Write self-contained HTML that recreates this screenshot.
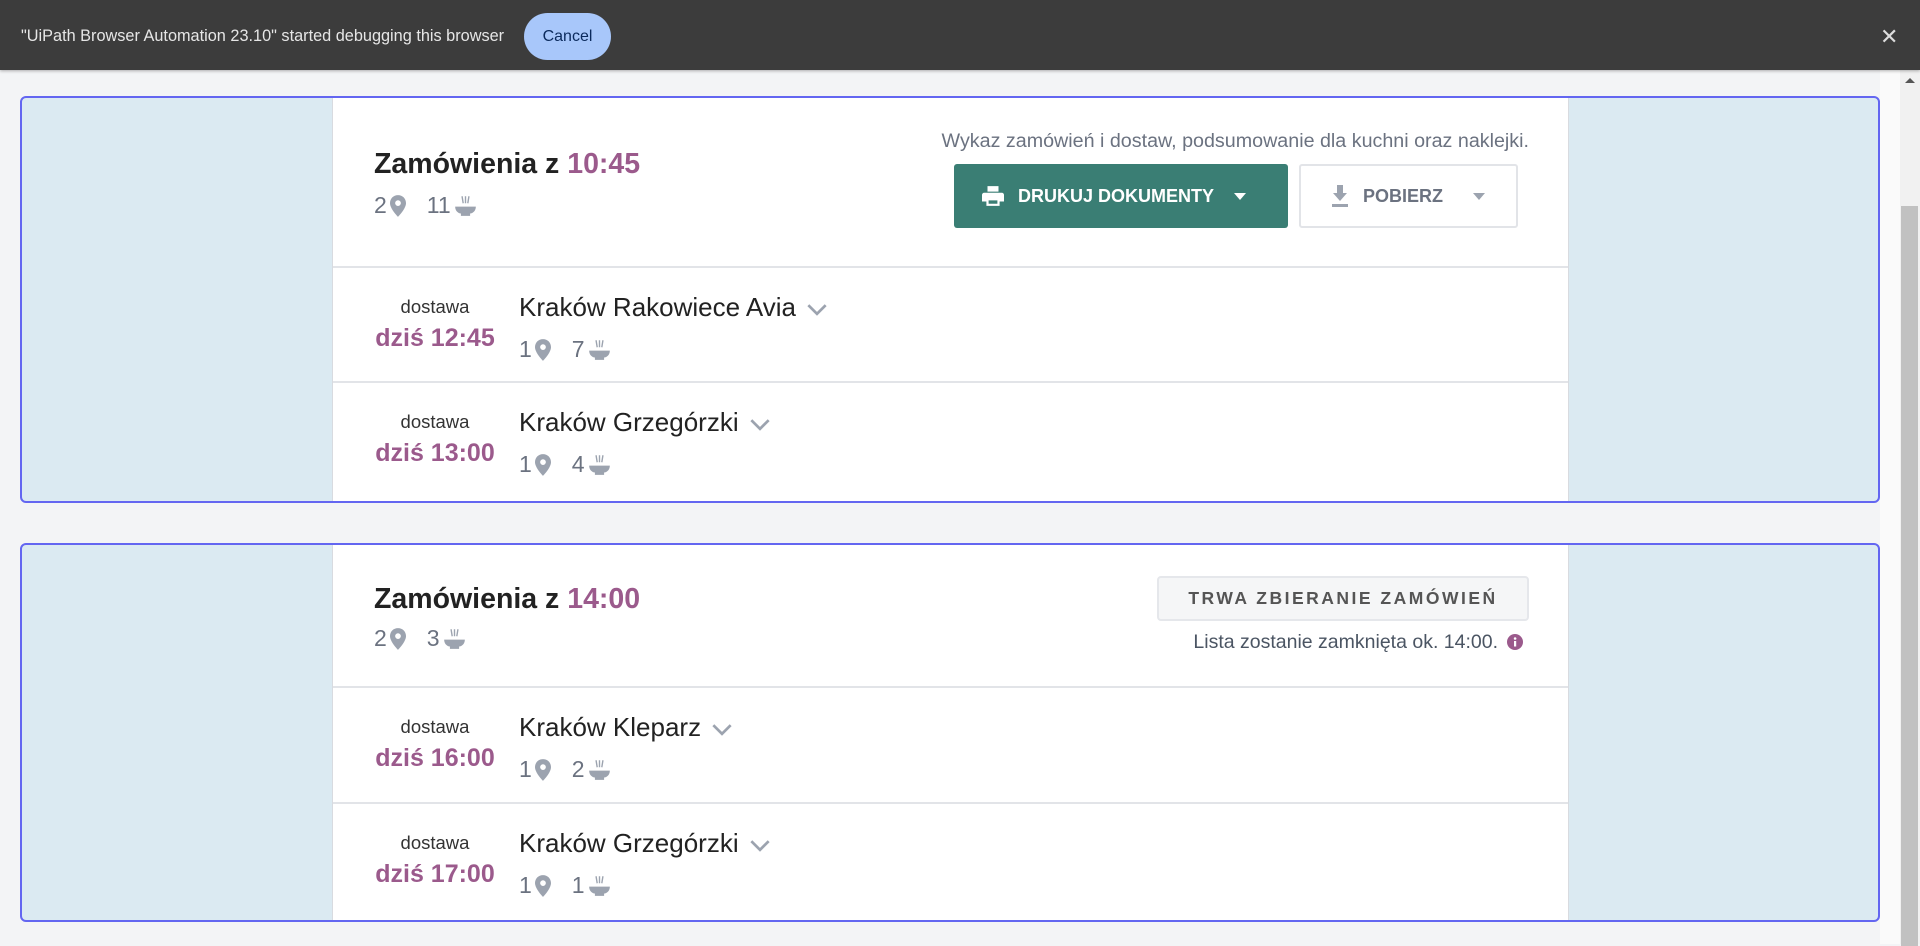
<!DOCTYPE html>
<html><head><meta charset="utf-8"><style>
*{box-sizing:border-box;margin:0;padding:0}
body{width:1920px;height:944px;overflow:hidden;background:#f3f4f6;font-family:"Liberation Sans",sans-serif;position:relative}
.bar{position:absolute;left:0;top:0;width:1920px;height:70px;background:#3c3c3c;box-shadow:0 1px 3px rgba(0,0,0,.3);z-index:5}
.bar .t{position:absolute;left:21px;top:27px;color:#e6e6e6;font-size:16.3px}
.bar .c{position:absolute;left:524px;top:13px;width:87px;height:47px;border-radius:24px;background:#a8c7fa;color:#0b2a5c;font-size:16px;text-align:center;line-height:47px}
.bar .x{position:absolute;left:1880px;top:24px;color:#ddd;font-size:22px}
.sb{position:absolute;left:1900px;top:70px;width:20px;height:874px;background:#f1f1f1}
.sb .th{position:absolute;left:1px;top:136px;width:17px;height:740px;background:#c1c1c1}
.sb .up{position:absolute;left:5px;top:8px;width:0;height:0;border-left:5px solid transparent;border-right:5px solid transparent;border-bottom:5px solid #555}
.strip{position:absolute;left:1880px;top:70px;width:20px;height:874px;background:#fafafa}
.box{position:absolute;left:20px;width:1860px;border:2px solid #6366f1;border-radius:6px;background:#dbeaf2}
.card{position:absolute;left:310px;top:0;width:1237px;background:#fff;border-left:1px solid #d8dbe0;border-right:1px solid #d8dbe0}
.hd{position:relative;border-bottom:2px solid #e2e4e8}
.title{position:absolute;left:41px;font-size:28.5px;font-weight:bold;color:#222}
.title span{color:#9b5a8c}
.cnt{position:absolute;font-size:23px;color:#6b7280;display:flex;align-items:center;gap:3px}
.cnt span{margin-left:18px}
.row{position:relative;border-bottom:2px solid #e2e4e8}
.dost{position:absolute;left:0;width:204px;text-align:center;font-size:18.5px;color:#333}
.dz{position:absolute;left:0;width:204px;text-align:center;font-size:25px;font-weight:bold;color:#9b5a8c}
.loc{position:absolute;left:186px;font-size:26px;color:#222}
.chev{display:inline-block;vertical-align:middle;margin-left:10px}
.pin{width:16px;height:22px}
.bowl{width:23px;height:23px}
</style></head><body>
<div class="bar"><div class="t">"UiPath Browser Automation 23.10" started debugging this browser</div><div class="c">Cancel</div><div class="x">✕</div></div>
<div class="strip"></div>
<div class="sb"><div class="up"></div><div class="th"></div></div>

<svg width="0" height="0" style="position:absolute"><defs>
<symbol id="pin" viewBox="0 0 14 19"><path d="M7 0C3 0 0 3 0 7c0 5 7 12 7 12s7-7 7-12c0-4-3-7-7-7zm0 9.5a2.5 2.5 0 1 1 0-5 2.5 2.5 0 0 1 0 5z" fill="#9ca3af"/></symbol>
<symbol id="bowl" viewBox="0 0 20 20"><path d="M1 11h18c0 4-3 6-5 6v2H6v-2c-2 0-5-2-5-6z" fill="#9ca3af"/><path d="M7 2l1 6M10 2v6M13 2l-1 6" stroke="#9ca3af" stroke-width="1.2"/></symbol>
<symbol id="chev" viewBox="0 0 20 12"><path d="M2 2l8 8 8-8" stroke="#9ca3af" stroke-width="2.5" fill="none"/></symbol>
</defs></svg>

<div class="box" style="top:96px;height:407px">
 <div class="card" style="height:403px">
  <div class="hd" style="height:170px">
   <div class="title" style="top:50px">Zamówienia z <span>10:45</span></div>
   <div class="cnt" style="left:41px;top:94px">2<svg class="pin"><use href="#pin"/></svg><span>11</span><svg class="bowl"><use href="#bowl"/></svg></div>
   <div style="position:absolute;right:39px;top:32px;font-size:19.7px;color:#6b7280">Wykaz zamówień i dostaw, podsumowanie dla kuchni oraz naklejki.</div>
   <div style="position:absolute;left:621px;top:66px;width:334px;height:64px;background:#3a7e74;border-radius:3px;color:#fff;font-weight:bold;font-size:18px;display:flex;align-items:center">
    <svg style="margin-left:28px" width="22" height="22" viewBox="0 0 20 20"><path d="M5 1h10v5H5zM2 7h16a2 2 0 0 1 2 2v6h-4v4H4v-4H0V9a2 2 0 0 1 2-2zm4 7v3h8v-3z" fill="#fff"/></svg>
    <span style="margin-left:14px">DRUKUJ DOKUMENTY</span>
    <svg style="margin-left:20px" width="12" height="7"><path d="M0 0h12L6 7z" fill="#fff"/></svg>
   </div>
   <div style="position:absolute;left:966px;top:66px;width:219px;height:64px;border:2px solid #e2e4e8;border-radius:3px;color:#6b7280;font-weight:bold;font-size:18px;display:flex;align-items:center">
    <svg style="margin-left:30px" width="18" height="24" viewBox="0 0 18 22"><path d="M6 0h6v8h4l-7 8-7-8h4zM1 19h16v3H1z" fill="#9ca3af"/></svg>
    <span style="margin-left:14px">POBIERZ</span>
    <svg style="margin-left:30px" width="12" height="7"><path d="M0 0h12L6 7z" fill="#9ca3af"/></svg>
   </div>
  </div>
  <div class="row" style="height:115px">
   <div class="dost" style="top:28px">dostawa</div><div class="dz" style="top:56px">dziś 12:45</div>
   <div class="loc" style="top:24px">Kraków Rakowiece Avia<svg class="chev" width="22" height="13"><use href="#chev"/></svg></div>
   <div class="cnt" style="left:186px;top:68px">1<svg class="pin"><use href="#pin"/></svg><span>7</span><svg class="bowl"><use href="#bowl"/></svg></div>
  </div>
  <div class="row" style="height:116px;border-bottom:none">
   <div class="dost" style="top:28px">dostawa</div><div class="dz" style="top:56px">dziś 13:00</div>
   <div class="loc" style="top:24px">Kraków Grzegórzki<svg class="chev" width="22" height="13"><use href="#chev"/></svg></div>
   <div class="cnt" style="left:186px;top:68px">1<svg class="pin"><use href="#pin"/></svg><span>4</span><svg class="bowl"><use href="#bowl"/></svg></div>
  </div>
 </div>
</div>

<div class="box" style="top:543px;height:379px">
 <div class="card" style="height:375px">
  <div class="hd" style="height:143px">
   <div class="title" style="top:38px">Zamówienia z <span>14:00</span></div>
   <div class="cnt" style="left:41px;top:80px">2<svg class="pin"><use href="#pin"/></svg><span>3</span><svg class="bowl"><use href="#bowl"/></svg></div>
   <div style="position:absolute;left:824px;top:31px;width:372px;height:45px;background:#f5f6f7;border:2px solid #e5e7eb;border-radius:4px;color:#555;font-weight:bold;font-size:17.5px;letter-spacing:2.5px;text-align:center;line-height:41px">TRWA ZBIERANIE ZAMÓWIEŃ</div>
   <div style="position:absolute;right:70px;top:86px;font-size:19.5px;color:#4b5563">Lista zostanie zamknięta ok. 14:00.</div>
   <svg style="position:absolute;left:1174px;top:89px" width="16" height="16" viewBox="0 0 16 16"><circle cx="8" cy="8" r="8" fill="#9b5a8c"/><rect x="7" y="7" width="2.2" height="5.5" fill="#fff"/><circle cx="8.1" cy="4.5" r="1.3" fill="#fff"/></svg>
  </div>
  <div class="row" style="height:116px">
   <div class="dost" style="top:28px">dostawa</div><div class="dz" style="top:56px">dziś 16:00</div>
   <div class="loc" style="top:24px">Kraków Kleparz<svg class="chev" width="22" height="13"><use href="#chev"/></svg></div>
   <div class="cnt" style="left:186px;top:68px">1<svg class="pin"><use href="#pin"/></svg><span>2</span><svg class="bowl"><use href="#bowl"/></svg></div>
  </div>
  <div class="row" style="height:116px;border-bottom:none">
   <div class="dost" style="top:28px">dostawa</div><div class="dz" style="top:56px">dziś 17:00</div>
   <div class="loc" style="top:24px">Kraków Grzegórzki<svg class="chev" width="22" height="13"><use href="#chev"/></svg></div>
   <div class="cnt" style="left:186px;top:68px">1<svg class="pin"><use href="#pin"/></svg><span>1</span><svg class="bowl"><use href="#bowl"/></svg></div>
  </div>
 </div>
</div>
</body></html>
